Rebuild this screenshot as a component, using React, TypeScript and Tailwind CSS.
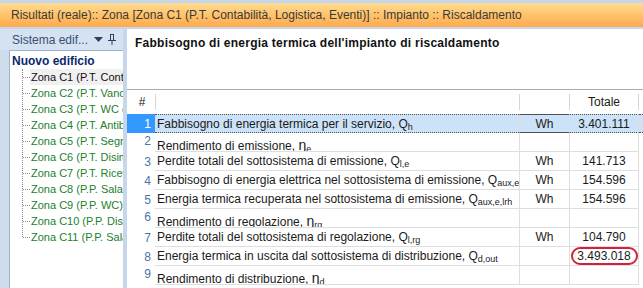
import React from "react";

type Row = {
  n: number;
  label: React.ReactNode;
  unit?: string;
  total?: string;
  eta?: boolean;
  selected?: boolean;
  circled?: boolean;
};

const Sub = ({ children }: { children: React.ReactNode }) => (
  <span className="text-[9px] relative top-[2px]">{children}</span>
);

const Eta = ({ sub }: { sub: string }) => (
  <>
    <span className="text-[14px] leading-none">η</span>
    <Sub>{sub}</Sub>
  </>
);

const rows: Row[] = [
  {
    n: 1,
    label: (
      <>
        Fabbisogno di energia termica per il servizio, Q<Sub>h</Sub>
      </>
    ),
    unit: "Wh",
    total: "3.401.111",
    selected: true,
  },
  {
    n: 2,
    label: (
      <>
        Rendimento di emissione, <Eta sub="e" />
      </>
    ),
    eta: true,
  },
  {
    n: 3,
    label: (
      <>
        Perdite totali del sottosistema di emissione, Q<Sub>l,e</Sub>
      </>
    ),
    unit: "Wh",
    total: "141.713",
  },
  {
    n: 4,
    label: (
      <>
        Fabbisogno di energia elettrica nel sottosistema di emissione, Q<Sub>aux,e</Sub>
      </>
    ),
    unit: "Wh",
    total: "154.596",
  },
  {
    n: 5,
    label: (
      <>
        Energia termica recuperata nel sottosistema di emissione, Q<Sub>aux,e,lrh</Sub>
      </>
    ),
    unit: "Wh",
    total: "154.596",
  },
  {
    n: 6,
    label: (
      <>
        Rendimento di regolazione, <Eta sub="rg" />
      </>
    ),
    eta: true,
  },
  {
    n: 7,
    label: (
      <>
        Perdite totali del sottosistema di regolazione, Q<Sub>l,rg</Sub>
      </>
    ),
    unit: "Wh",
    total: "104.790",
  },
  {
    n: 8,
    label: (
      <>
        Energia termica in uscita dal sottosistema di distribuzione, Q<Sub>d,out</Sub>
      </>
    ),
    total: "3.493.018",
    circled: true,
  },
  {
    n: 9,
    label: (
      <>
        Rendimento di distribuzione, <Eta sub="d" />
      </>
    ),
    eta: true,
  },
];

const zones = [
  "Zona C1 (P.T. Contabilità, Logistica, Eventi)",
  "Zona C2 (P.T. Vano scala)",
  "Zona C3 (P.T. WC e spogliatoi)",
  "Zona C4 (P.T. Antibagno)",
  "Zona C5 (P.T. Segreteria)",
  "Zona C6 (P.T. Disimpegno)",
  "Zona C7 (P.T. Ricevimento)",
  "Zona C8 (P.P. Sala riunioni)",
  "Zona C9 (P.P. WC)",
  "Zona C10 (P.P. Disimpegno)",
  "Zona C11 (P.P. Sala attesa)",
];

const TableRow = ({ row }: { row: Row }) => {
  const sel = row.selected;
  const cell = sel
    ? "bg-[#cbe2f8] border-y border-dotted border-[#505050]"
    : "border-b border-[#dedede]";
  return (
    <div className="flex h-[19px] shrink-0">
      <div
        className={`w-[364px] shrink-0 flex items-center pl-[2px] whitespace-nowrap overflow-hidden ${cell}`}
      >
        <span className={row.eta ? "pt-[6px]" : ""}>{row.label}</span>
      </div>
      <div
        className={`w-[50px] shrink-0 flex items-center justify-center border-l ${cell} border-l-[#dedede] border-solid`}
      >
        {row.unit}
      </div>
      <div
        className={`w-[70px] shrink-0 flex items-center justify-center border-x ${cell} border-x-[#dedede]`}
      >
        {row.circled ? (
          <span className="border-2 border-[#d3203c] rounded-[9px] w-[67px] h-[18px] flex items-center justify-center">
            {row.total}
          </span>
        ) : (
          row.total
        )}
      </div>
      <div className={`flex-1 ${sel ? "bg-[#cbe2f8] border-y border-dotted border-[#505050]" : ""}`} />
    </div>
  );
};

export default function App() {
  return (
    <div
      className="w-[643px] h-[288px] overflow-hidden bg-[#c6d6eb] text-[12px] leading-none text-[#1a1a1a] flex flex-col"
      style={{ fontFamily: '"Liberation Sans", Arial, sans-serif' }}
    >
      <div className="h-[3px] bg-[#c6d6eb]" />
      {/* title bar */}
      <div className="h-[24px] flex items-center pl-[11px] text-[#3a3a3a] bg-gradient-to-b from-[#ffdc93] via-[#ffc36a] to-[#ffa94e]">
        Risultati (reale):: Zona [Zona C1 (P.T. Contabilità, Logistica, Eventi)] :: Impianto :: Riscaldamento
      </div>
      <div className="h-[2px] bg-[#c6d6eb]" />

      <div className="flex flex-1 min-h-0">
        {/* left panel */}
        <div className="w-[123px] shrink-0 flex flex-col bg-[#cfdcee]">
          <div className="h-[21px] flex items-center pl-[12px] text-[#3b4f6e] bg-[#d5e2f2]">
            <span>Sistema edif...</span>
            <svg width="9" height="6" viewBox="0 0 9 6" className="ml-[6px]">
              <path d="M0 0 L9 0 L4.5 5 Z" fill="#2c3f5d" />
            </svg>
            <svg width="8" height="11" viewBox="0 0 8 11" className="ml-[5px]">
              <path d="M2 0.5 H6 M2.5 0.5 V6 M5.5 0.5 V6 M0 6.5 H8 M4 6.5 V11" stroke="#2c3f5d" strokeWidth="1" fill="none" />
            </svg>
          </div>
          <div className="flex-1 ml-[9px] border-l border-t border-[#9fb3cf] bg-white pt-[2px] overflow-hidden">
            <div className="h-[16px] flex items-center pl-[2px] font-bold text-[#0c2a6b] text-[12px]">
              Nuovo edificio
            </div>
            <div className="relative text-[11px]">
              <div className="absolute left-[12px] top-0 h-[168px] border-l border-dotted border-[#8a8a8a]" />
              {zones.map((z, i) => (
                <div key={z} className="h-[16px] flex items-center whitespace-nowrap">
                  <div className="w-[7px] shrink-0 ml-[13px] border-t border-dotted border-[#8a8a8a]" />
                  <span
                    className={`shrink-0 pl-[1px] pr-[2px] h-full flex items-center ${
                      i === 0 ? "text-[#111] bg-[#f0f0f0]" : "text-[#23802e]"
                    }`}
                  >
                    {z}
                  </span>
                </div>
              ))}
            </div>
          </div>
        </div>

        <div className="w-[4px] shrink-0 bg-[#c6d6eb]" />

        {/* right panel */}
        <div className="flex-1 bg-white flex flex-col min-w-0">
          <div className="h-[60px] shrink-0 pl-[8px] pt-[8px] font-bold tracking-[0.25px] text-[#111]">
            Fabbisogno di energia termica dell'impianto di riscaldamento
          </div>
          <div className="flex-1 flex border-t border-[#a5adb8]">
            {/* number column */}
            <div className="w-[28px] shrink-0 flex flex-col">
              <div className="h-[24px] flex items-center justify-center pl-[2px]">#</div>
              {rows.map((r) => (
                <div
                  key={r.n}
                  className={`h-[19px] flex justify-end pr-[4px] ${
                    r.eta ? "items-start pt-[2px]" : "items-center"
                  } ${r.selected ? "bg-[#3399ff] text-white" : "text-[#4a74ab]"}`}
                >
                  {String(r.n)}
                </div>
              ))}
            </div>
            {/* data columns */}
            <div className="flex-1 flex flex-col min-w-0">
              <div className="flex h-[24px] shrink-0 items-center">
                <div className="w-[364px] h-[16px] border-l border-[#d5d5d5]" />
                <div className="w-[50px] h-[16px] border-l border-[#d5d5d5]" />
                <div className="w-[70px] h-[16px] border-x border-[#d5d5d5] flex items-center justify-center">
                  Totale
                </div>
              </div>
              {rows.map((r) => (
                <TableRow key={r.n} row={r} />
              ))}
            </div>
          </div>
        </div>
      </div>
    </div>
  );
}
